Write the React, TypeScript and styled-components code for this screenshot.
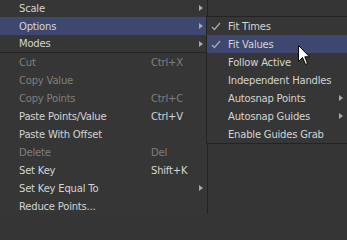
import React from "react";
import styled, { createGlobalStyle } from "styled-components";

const Global = createGlobalStyle`
  html, body { margin: 0; padding: 0; background: #353535; overflow: hidden; }
  body { width: 347px; height: 214px; }
`;

const Stage = styled.div`
  position: relative;
  width: 347px;
  height: 214px;
  overflow: hidden;
  background: #353535;
  font-family: "DejaVu Sans", "Liberation Sans", sans-serif;
  font-size: 10px;
  letter-spacing: -0.2px;
`;

const MainMenu = styled.div`
  display: flex;
  flex-direction: column;
  width: 207px;
  margin-top: -1px;
  border-right: 1px solid #232323;
  background: #363636;
`;

const Row = styled.div<{ $active?: boolean; $disabled?: boolean; $sep?: boolean }>`
  display: grid;
  grid-template-columns: 132px 1fr 8px;
  align-items: center;
  height: ${(p) => (p.$sep ? 17 : 18)}px;
  padding-left: 19px;
  background: ${(p) => (p.$active ? "#3d4770" : "transparent")};
  color: ${(p) => (p.$disabled ? "#7f7f7f" : "#d4d4d4")};
  border-bottom: ${(p) => (p.$sep ? "1px solid #262626" : "none")};
  white-space: nowrap;
`;

const Label = styled.span``;
const Shortcut = styled.span``;

const Arrow = styled.span`
  width: 0;
  height: 0;
  border-left: 4px solid #a8a8a8;
  border-top: 3.5px solid transparent;
  border-bottom: 3.5px solid transparent;
`;

const SubMenu = styled.div`
  position: absolute;
  left: 206px;
  top: 16px;
  width: 160px;
  display: flex;
  flex-direction: column;
  border: 1px solid #232323;
  background: #363636;
`;

const SubRow = styled.div<{ $active?: boolean }>`
  display: grid;
  grid-template-columns: 17px 111px 4px;
  align-items: center;
  height: 18px;
  padding-left: 4px;
  background: ${(p) => (p.$active ? "#3d4770" : "transparent")};
  color: #d4d4d4;
  white-space: nowrap;
`;

const Check = () => (
  <svg width="10" height="9" viewBox="0 0 10 9">
    <path d="M1 5 L3.5 7.5 L9 1" stroke="#a9a9a9" strokeWidth="1.4" fill="none" />
  </svg>
);

const Cursor = styled.svg`
  position: absolute;
  left: 298px;
  top: 45px;
`;

const main = [
  { label: "Scale", arrow: true },
  { label: "Options", arrow: true, active: true },
  { label: "Modes", arrow: true, sep: true },
  { label: "Cut", shortcut: "Ctrl+X", disabled: true },
  { label: "Copy Value", disabled: true },
  { label: "Copy Points", shortcut: "Ctrl+C", disabled: true },
  { label: "Paste Points/Value", shortcut: "Ctrl+V" },
  { label: "Paste With Offset" },
  { label: "Delete", shortcut: "Del", disabled: true },
  { label: "Set Key", shortcut: "Shift+K" },
  { label: "Set Key Equal To", arrow: true },
  { label: "Reduce Points..." },
];

const sub = [
  { label: "Fit Times", check: true },
  { label: "Fit Values", check: true, active: true },
  { label: "Follow Active" },
  { label: "Independent Handles" },
  { label: "Autosnap Points", arrow: true },
  { label: "Autosnap Guides", arrow: true },
  { label: "Enable Guides Grab" },
];

export default function App() {
  return (
    <>
      <Global />
      <Stage>
        <MainMenu>
          {main.map((m) => (
            <Row key={m.label} $active={m.active} $disabled={m.disabled} $sep={m.sep}>
              <Label>{m.label}</Label>
              <Shortcut>{m.shortcut ?? ""}</Shortcut>
              {m.arrow ? <Arrow /> : <span />}
            </Row>
          ))}
        </MainMenu>
        <SubMenu>
          {sub.map((s) => (
            <SubRow key={s.label} $active={s.active}>
              {s.check ? <Check /> : <span />}
              <Label>{s.label}</Label>
              {s.arrow ? <Arrow /> : <span />}
            </SubRow>
          ))}
        </SubMenu>
        <Cursor width="13" height="21" viewBox="0 0 13 21">
          <path
            d="M0.5 0.5 L0.5 16.5 L4.5 12.5 L7.5 19.5 L9.5 18.5 L6.8 11.8 L11.5 11.8 Z"
            fill="#ffffff"
            stroke="#000000"
            strokeWidth="1"
          />
        </Cursor>
      </Stage>
    </>
  );
}
